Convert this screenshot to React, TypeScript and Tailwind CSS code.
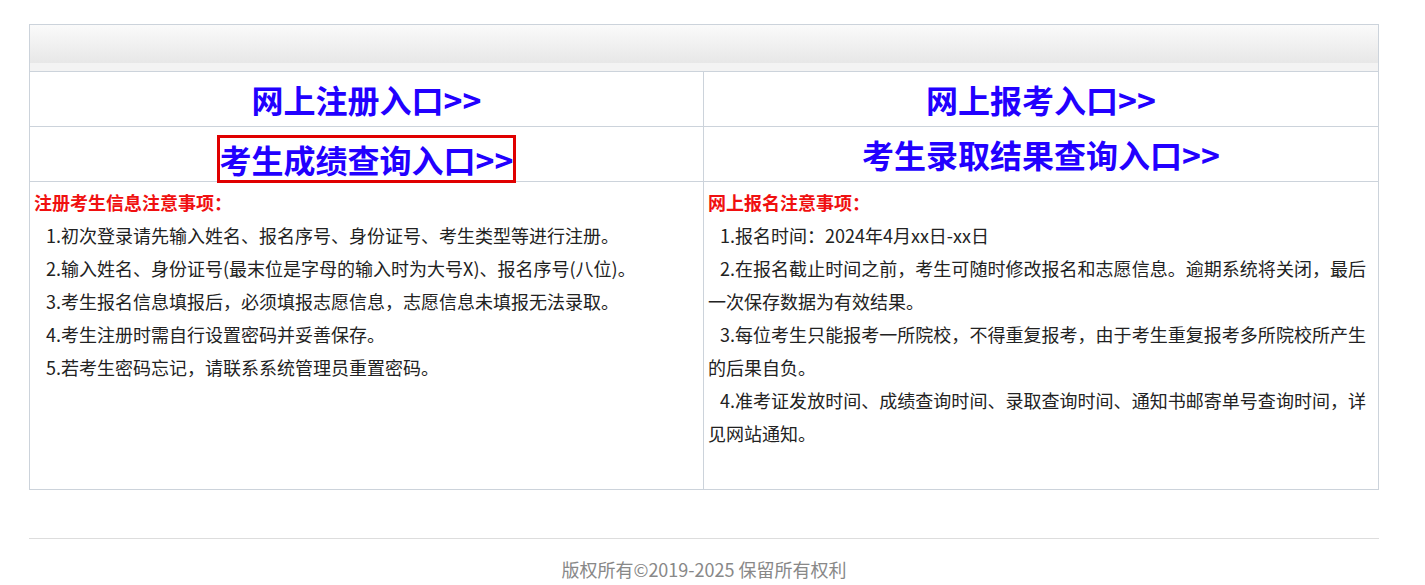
import React from "react";

const font = { fontFamily: '"Microsoft YaHei", "Noto Sans CJK SC", "Noto Sans", sans-serif' };

const leftNotes = [
  "1.初次登录请先输入姓名、报名序号、身份证号、考生类型等进行注册。",
  "2.输入姓名、身份证号(最末位是字母的输入时为大号X)、报名序号(八位)。",
  "3.考生报名信息填报后，必须填报志愿信息，志愿信息未填报无法录取。",
  "4.考生注册时需自行设置密码并妥善保存。",
  "5.若考生密码忘记，请联系系统管理员重置密码。",
];

const rightNotes = [
  "1.报名时间：2024年4月xx日-xx日",
  "2.在报名截止时间之前，考生可随时修改报名和志愿信息。逾期系统将关闭，最后一次保存数据为有效结果。",
  "3.每位考生只能报考一所院校，不得重复报考，由于考生重复报考多所院校所产生的后果自负。",
  "4.准考证发放时间、成绩查询时间、录取查询时间、通知书邮寄单号查询时间，详见网站通知。",
];

function LinkText({ children }: { children: React.ReactNode }) {
  return (
    <a className="text-[32px] font-bold leading-[40px] text-[#2200ff] no-underline cursor-pointer">
      {children}
    </a>
  );
}

function Notes({ title, items }: { title: string; items: string[] }) {
  return (
    <div className="pl-[4px] pr-[12px] pt-[4px] text-[18px] leading-[33px] text-[#222]">
      <div className="font-bold text-[#f01010]">{title}</div>
      {items.map((t, i) => (
        <p key={i} className="indent-[12px] text-justify">
          {t}
        </p>
      ))}
    </div>
  );
}

export default function App() {
  return (
    <div className="bg-white min-h-[585px] pt-[24px]" style={font}>
      <div className="ml-[29px] w-[1350px]">
        <div className="border border-[#ccd3db]">
          <div className="h-[47px] flex flex-col border-b border-[#ccd3db]">
            <div className="flex-1 bg-gradient-to-b from-[#fafafa] to-[#e7e7e7]" />
            <div className="h-[8px] bg-[#f3f3f3]" />
          </div>
          <div className="grid grid-cols-[674px_1fr]">
            <div className="h-[55px] flex items-center justify-center border-b border-r border-[#ccd3db]">
              <LinkText>网上注册入口&gt;&gt;</LinkText>
            </div>
            <div className="h-[55px] flex items-center justify-center border-b border-[#ccd3db]">
              <LinkText>网上报考入口&gt;&gt;</LinkText>
            </div>
            <div className="h-[55px] flex items-start justify-center border-b border-r border-[#ccd3db] pt-[8px] relative">
              <div className="h-[48px] border-[3px] border-[#e00000] flex items-center bg-white relative z-10">
                <LinkText>考生成绩查询入口&gt;&gt;</LinkText>
              </div>
            </div>
            <div className="h-[55px] flex items-center justify-center border-b border-[#ccd3db]">
              <LinkText>考生录取结果查询入口&gt;&gt;</LinkText>
            </div>
            <div className="h-[307px] border-r border-[#ccd3db]">
              <Notes title="注册考生信息注意事项：" items={leftNotes} />
            </div>
            <div className="h-[307px]">
              <Notes title="网上报名注意事项：" items={rightNotes} />
            </div>
          </div>
        </div>
        <div className="mt-[48px] border-t border-[#dddddd] pt-[16px] text-center text-[18px] leading-[28px] text-[#888888]">
          版权所有©2019-2025 保留所有权利
        </div>
      </div>
    </div>
  );
}
